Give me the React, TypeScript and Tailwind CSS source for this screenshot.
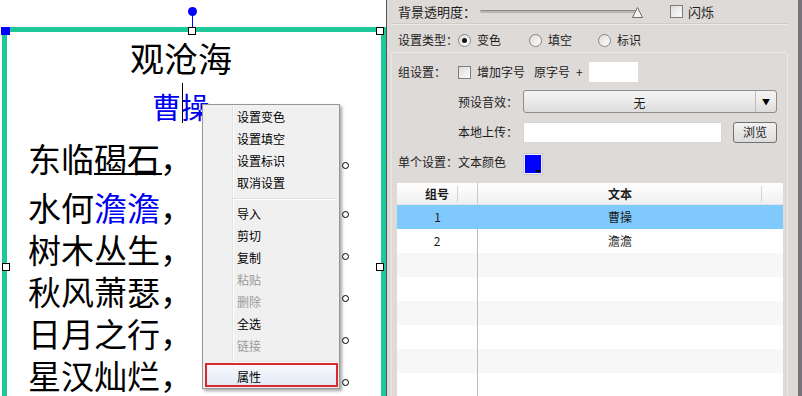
import React from "react";

type MenuItem = { label: string; disabled?: boolean };

const menuTop: MenuItem[] = [
  { label: "设置变色" },
  { label: "设置填空" },
  { label: "设置标识" },
  { label: "取消设置" },
];

const menuEdit: MenuItem[] = [
  { label: "导入" },
  { label: "剪切" },
  { label: "复制" },
  { label: "粘贴", disabled: true },
  { label: "删除", disabled: true },
  { label: "全选" },
  { label: "链接", disabled: true },
];

const poem = [
  { pre: "东临", mark: "碣石", post: "，", blue: false, under: true },
  { pre: "水何", mark: "澹澹", post: "，", blue: true, under: false },
  { pre: "树木丛生，", mark: "", post: "", blue: false, under: false },
  { pre: "秋风萧瑟，", mark: "", post: "", blue: false, under: false },
  { pre: "日月之行，", mark: "", post: "", blue: false, under: false },
  { pre: "星汉灿烂，", mark: "", post: "", blue: false, under: false },
];

const rows = [
  { id: "1", text: "曹操", selected: true },
  { id: "2", text: "澹澹" },
  { id: "", text: "" },
  { id: "", text: "" },
  { id: "", text: "" },
  { id: "", text: "" },
  { id: "", text: "" },
  { id: "", text: "" },
];

function Handle({ className }: { className: string }) {
  return <div className={`absolute h-[8px] w-[8px] border border-black bg-white ${className}`} />;
}

function Checkbox() {
  return (
    <span className="inline-block h-[13px] w-[13px] shrink-0 border border-[#7d7d7d] bg-linear-to-br from-[#dedede] to-[#fbfbfb]" />
  );
}

function Radio({ checked }: { checked?: boolean }) {
  return (
    <span className="flex h-[13px] w-[13px] shrink-0 items-center justify-center rounded-full border border-[#868686] bg-linear-to-br from-[#dcdcdc] to-[#ffffff]">
      {checked && <span className="h-[5px] w-[5px] rounded-full bg-[#151515]" />}
    </span>
  );
}

function ContextMenu() {
  return (
    <div className="absolute left-[202px] top-[104px] w-[138px] border border-[#979797] bg-[#f0f0f0] pt-px text-[12px] shadow-[2px_2px_3px_rgba(0,0,0,0.35)]">
      {/* icon gutter */}
      <div className="absolute bottom-0 left-[29px] top-0 w-px bg-[#e2e3e3]" />
      <div className="absolute bottom-0 left-[30px] top-0 w-px bg-white" />
      {menuTop.map((m) => (
        <div key={m.label} className="relative flex h-[22px] items-center pl-[34px] text-black">
          {m.label}
        </div>
      ))}
      <div className="relative flex h-[9px] flex-col justify-center pl-[30px] pr-[2px]">
        <div className="h-px bg-[#e0e0e0]" />
        <div className="h-px bg-white" />
      </div>
      {menuEdit.map((m) => (
        <div
          key={m.label}
          className={`relative flex h-[22px] items-center pl-[34px] ${m.disabled ? "text-[#9a9a9a]" : "text-black"}`}
        >
          {m.label}
        </div>
      ))}
      <div className="relative flex h-[9px] flex-col justify-center pl-[30px] pr-[2px]">
        <div className="h-px bg-[#e0e0e0]" />
        <div className="h-px bg-white" />
      </div>
      <div className="relative flex h-[22px] items-center pl-[34px] text-black">
        <div className="absolute -top-[3px] bottom-[1px] left-[2px] right-[1px] border-2 border-[#d52b30] bg-linear-to-b from-[#f7f9fd] to-[#e2eaf5]" />
        <span className="relative">属性</span>
      </div>
    </div>
  );
}

function Canvas() {
  return (
    <div className="relative w-[386px] shrink-0 bg-white">
      {/* rotate handle */}
      <div className="absolute left-[192px] top-[11px] h-[17px] w-px bg-[#0000ff]" />
      <div className="absolute left-[188px] top-[7px] h-[9px] w-[9px] rounded-full bg-[#0000ff]" />

      <div className="ml-[2px] mt-[27px] h-[420px] w-[384px] border-[5px] border-[#1dc99b] pr-[26px]">
        <div className="pt-[9px] text-center text-[34px] leading-[34px]">观沧海</div>
        <div className="relative mt-[16px] text-center text-[29px] leading-[30px] text-[#0000f0]">
          曹操
          <div className="absolute -top-[8px] left-[175px] h-[40px] w-px bg-black" />
        </div>
        <div className="mt-[16px] pl-[21px] text-[33px]">
          {poem.map((l, i) => (
            <div key={i} className={`relative h-[42px] leading-[42px] ${i === 1 ? "mt-[7px]" : ""}`}>
              {l.pre}
              {l.mark && <span className={l.blue ? "text-[#0000f0]" : ""}>{l.mark}</span>}
              {l.post}
              {l.under && <div className="absolute left-[66px] top-[36px] h-[2px] w-[68px] bg-black" />}
              <div className="absolute left-[314px] top-[25px] h-[7px] w-[7px] rounded-full border border-black bg-white" />
            </div>
          ))}
        </div>
      </div>

      <div className="absolute left-[1px] top-[27px] h-[8px] w-[9px] bg-[#0000ff]" />
      <Handle className="left-[188px] top-[27px]" />
      <Handle className="left-[376px] top-[27px]" />
      <Handle className="left-[2px] top-[263px]" />
      <Handle className="left-[376px] top-[263px]" />

      <ContextMenu />
    </div>
  );
}

function Panel() {
  return (
    <div className="flex w-[416px] flex-col whitespace-nowrap border-l border-r-4 border-l-[#4f5a58] border-r-[#77737b] bg-[#dedad8] text-[12px] text-[#1c1c1c]">
      {/* opacity row */}
      <div className="flex h-[23px] shrink-0 items-center pl-[11px]">
        <span className="w-[82px] text-[13px]">背景透明度：</span>
        <div className="relative h-[23px] w-[162px]">
          <div className="absolute left-0 right-[6px] top-[10px] h-[3px] rounded-full border-t border-[#8a8a8a] bg-[#b9b6b5]" />
          <svg className="absolute left-[152px] top-[7px]" width="11" height="11" viewBox="0 0 11 11">
            <polygon points="5.5,0.5 10.5,10.5 0.5,10.5" fill="#f4f4f4" stroke="#6f6f6f" />
          </svg>
        </div>
        <div className="ml-[28px] flex items-center gap-[5px] text-[13px]">
          <Checkbox />
          闪烁
        </div>
      </div>
      <div className="ml-[4px] mr-[10px] h-[2px] shrink-0 border-t border-[#cfcbc9] bg-[#ebe8e6]" />

      {/* type row */}
      <div className="flex h-[27px] shrink-0 items-center pl-[11px] pt-[3px]">
        <span className="w-[60px]">设置类型：</span>
        <div className="flex w-[71px] items-center gap-[6px]">
          <Radio checked />
          变色
        </div>
        <div className="flex w-[69px] items-center gap-[6px]">
          <Radio />
          填空
        </div>
        <div className="flex items-center gap-[6px]">
          <Radio />
          标识
        </div>
      </div>

      {/* group box */}
      <div className="ml-[4px] mr-[10px] flex flex-1 flex-col rounded-[3px] border border-[#ebe8e6] pl-[6px] pt-[6px]">
        <div className="flex h-[26px] items-center">
          <span className="w-[60px]">组设置：</span>
          <Checkbox />
          <span className="ml-[6px]">增加字号</span>
          <span className="ml-[9px]">原字号</span>
          <span className="ml-[6px]">+</span>
          <div className="ml-[6px] h-[20px] w-[49px] bg-white" />
        </div>
        <div className="mt-[4px] flex h-[25px] items-center pl-[60px]">
          <span className="w-[65px]">预设音效：</span>
          <div className="flex h-[23px] w-[254px] rounded-[3px] border border-[#8d8d8d] bg-linear-to-b from-[#f4f4f4] via-[#ebebeb] to-[#dcdcdc]">
            <span className="flex-1 pt-[3px] text-center text-[12px] leading-[18px]">无</span>
            <span className="flex w-[21px] items-center justify-center border-l border-[#bdbdbd] text-[8px] text-black">▼</span>
          </div>
        </div>
        <div className="mt-[6px] flex h-[24px] items-center pl-[60px]">
          <span className="w-[65px]">本地上传：</span>
          <div className="h-[21px] w-[199px] border border-[#d6d6d6] bg-white" />
          <div className="ml-[11px] flex h-[21px] w-[44px] items-center justify-center rounded-[3px] border border-[#707070] bg-linear-to-b from-[#f3f3f3] to-[#dcdcdc] text-[12px]">
            浏览
          </div>
        </div>
        <div className="mt-[6px] flex h-[24px] items-center">
          <span className="w-[125px]">单个设置：文本颜色</span>
          <div className="relative mt-[4px] h-[22px] w-[20px] border border-[#c9c9c9] bg-[#efefef] p-[1px]">
            <div className="h-full w-full bg-[#0000ff]" />
            <div className="absolute bottom-[1px] right-[1px] h-0 w-0 border-l-[3px] border-r-[3px] border-t-[3px] border-l-transparent border-r-transparent border-t-black" />
          </div>
        </div>

        {/* table */}
        <div className="-ml-[1px] mt-[9px] w-[386px] bg-white text-[12px]">
          <div className="flex h-[22px] items-center border-b border-[#e4e4e4] bg-linear-to-b from-white to-[#f0f0f0] font-bold">
            <div className="relative flex h-full w-[81px] items-center justify-center border-r border-[#c9c9c9]">
              组号
              <div className="absolute right-[19px] top-[3px] h-[16px] w-px bg-[#d3d3d3]" />
            </div>
            <div className="relative flex h-full w-[284px] items-center justify-center">
              文本
              <div className="absolute right-0 top-[3px] h-[16px] w-px bg-[#d3d3d3]" />
            </div>
            <div className="w-[21px]" />
          </div>
          {rows.map((r, i) => (
            <div
              key={i}
              className={`flex h-[24px] items-center ${
                r.selected ? "bg-[#80c9fd]" : i % 2 === 0 ? "bg-[#f7f7f7]" : "bg-white"
              }`}
            >
              <div
                className={`flex h-full w-[81px] items-center justify-center ${
                  r.selected ? "" : "border-r border-[#bdbdbd]"
                }`}
              >
                {r.id}
              </div>
              <div className="flex h-full w-[284px] items-center justify-center">{r.text}</div>
            </div>
          ))}
        </div>
      </div>
    </div>
  );
}

export default function App() {
  return (
    <div className="flex h-[396px] w-[802px] overflow-hidden bg-white font-['Noto_Sans_CJK_SC','Noto_Sans',sans-serif] text-black">
      <Canvas />
      <Panel />
    </div>
  );
}
